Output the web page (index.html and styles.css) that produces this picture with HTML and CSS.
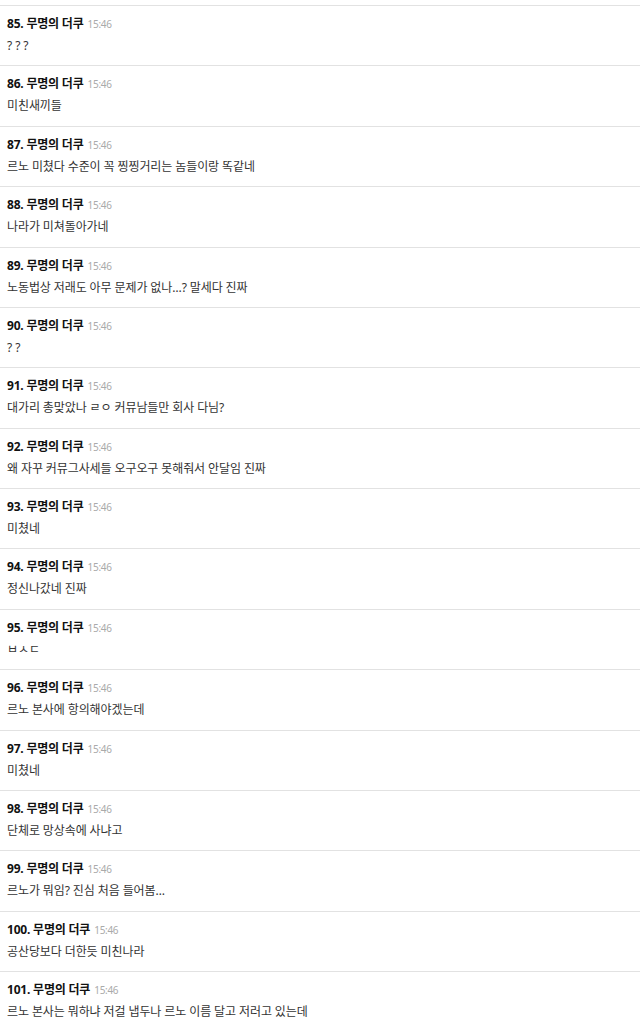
FILE: index.html
```html
<!DOCTYPE html>
<html lang="ko">
<head>
<meta charset="utf-8">
<link rel="stylesheet" href="styles.css">
</head>
<body>
<ul class="comments">
<li class="comment"><div class="head"><span class="nick">85. 무명의 더쿠</span><span class="time">15:46</span></div><div class="text">? ? ?</div></li>
<li class="comment"><div class="head"><span class="nick">86. 무명의 더쿠</span><span class="time">15:46</span></div><div class="text">미친새끼들</div></li>
<li class="comment"><div class="head"><span class="nick">87. 무명의 더쿠</span><span class="time">15:46</span></div><div class="text">르노 미쳤다 수준이 꼭 찡찡거리는 놈들이랑 똑같네</div></li>
<li class="comment"><div class="head"><span class="nick">88. 무명의 더쿠</span><span class="time">15:46</span></div><div class="text">나라가 미쳐돌아가네</div></li>
<li class="comment"><div class="head"><span class="nick">89. 무명의 더쿠</span><span class="time">15:46</span></div><div class="text">노동법상 저래도 아무 문제가 없나…? 말세다 진짜</div></li>
<li class="comment"><div class="head"><span class="nick">90. 무명의 더쿠</span><span class="time">15:46</span></div><div class="text">? ?</div></li>
<li class="comment"><div class="head"><span class="nick">91. 무명의 더쿠</span><span class="time">15:46</span></div><div class="text">대가리 총맞았나 ㄹㅇ 커뮤남들만 회사 다님?</div></li>
<li class="comment"><div class="head"><span class="nick">92. 무명의 더쿠</span><span class="time">15:46</span></div><div class="text">왜 자꾸 커뮤그사세들 오구오구 못해줘서 안달임 진짜</div></li>
<li class="comment"><div class="head"><span class="nick">93. 무명의 더쿠</span><span class="time">15:46</span></div><div class="text">미쳤네</div></li>
<li class="comment"><div class="head"><span class="nick">94. 무명의 더쿠</span><span class="time">15:46</span></div><div class="text">정신나갔네 진짜</div></li>
<li class="comment"><div class="head"><span class="nick">95. 무명의 더쿠</span><span class="time">15:46</span></div><div class="text">ㅂㅅㄷ</div></li>
<li class="comment"><div class="head"><span class="nick">96. 무명의 더쿠</span><span class="time">15:46</span></div><div class="text">르노 본사에 항의해야겠는데</div></li>
<li class="comment"><div class="head"><span class="nick">97. 무명의 더쿠</span><span class="time">15:46</span></div><div class="text">미쳤네</div></li>
<li class="comment"><div class="head"><span class="nick">98. 무명의 더쿠</span><span class="time">15:46</span></div><div class="text">단체로 망상속에 사냐고</div></li>
<li class="comment"><div class="head"><span class="nick">99. 무명의 더쿠</span><span class="time">15:46</span></div><div class="text">르노가 뭐임? 진심 처음 들어봄…</div></li>
<li class="comment"><div class="head"><span class="nick">100. 무명의 더쿠</span><span class="time">15:46</span></div><div class="text">공산당보다 더한듯 미친나라</div></li>
<li class="comment"><div class="head"><span class="nick">101. 무명의 더쿠</span><span class="time">15:46</span></div><div class="text">르노 본사는 뭐하냐 저걸 냅두나 르노 이름 달고 저러고 있는데</div></li>
</ul>
</body>
</html>
```

FILE: styles.css
```css
html, body {
  margin: 0;
  padding: 0;
  background: #fff;
}
body {
  font-family: "Noto Sans", "Noto Sans CJK KR", sans-serif;
  color: #333;
}
.comments {
  list-style: none;
  margin: 5px 0 0 0;
  padding: 0;
}
.comment {
  border-top: 1px solid #e2e2e2;
  padding: 8px 8px 9.375px 7px;
}
.head {
  display: flex;
  align-items: baseline;
  gap: 4px;
  height: 20px;
  line-height: 20px;
}
.nick {
  font-size: 12px;
  font-weight: 700;
  color: #111;
  letter-spacing: -0.2px;
}
.time {
  font-size: 10px;
  color: #aaa;
  letter-spacing: -0.3px;
}
.text {
  margin-top: 2px;
  font-size: 12px;
  line-height: 20px;
  color: #333;
  letter-spacing: -0.1px;
}
```
